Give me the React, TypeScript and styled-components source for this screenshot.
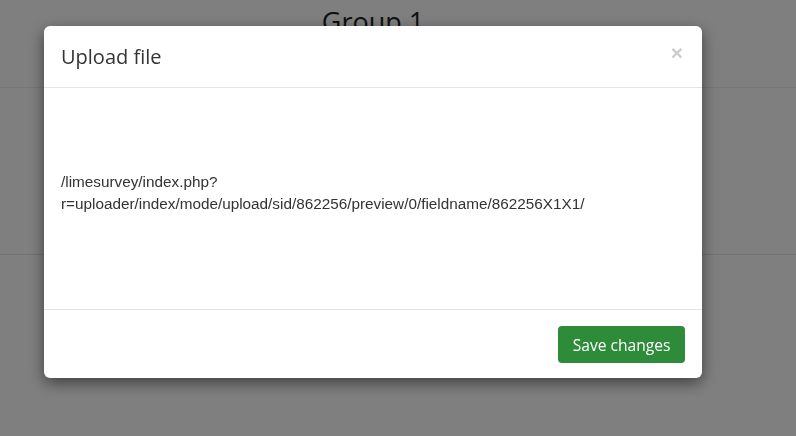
import React from 'react';
import styled, { createGlobalStyle } from 'styled-components';

const GlobalStyle = createGlobalStyle`
  html, body {
    margin: 0;
    padding: 0;
    background: #ffffff;
  }
  body {
    font-family: "Open Sans", "Liberation Sans", sans-serif;
    color: #333333;
  }
`;

const Page = styled.div`
  width: 796px;
  height: 436px;
  overflow: hidden;
  background: #ffffff;
`;

const GroupHeading = styled.div`
  height: 87px;
  border-bottom: 1px solid #eeeeee;
  text-align: center;
  padding-right: 50px;
`;

const GroupTitle = styled.h2`
  margin: 0;
  padding-top: 3px;
  font-family: "Open Sans", sans-serif;
  font-weight: 400;
  font-size: 27px;
  line-height: 38px;
  color: #222222;
`;

const GroupBody = styled.div`
  height: 166px;
  border-bottom: 1px solid #e6e6e6;
`;

const Backdrop = styled.div`
  position: fixed;
  inset: 0;
  background: rgba(0, 0, 0, 0.5);
  display: flex;
  align-items: flex-start;
  padding: 26px 94px 0 44px;
`;

const Dialog = styled.div`
  width: 658px;
  background: #ffffff;
  border-radius: 6px;
  box-shadow: 0 5px 15px rgba(0, 0, 0, 0.5);
`;

const Header = styled.div`
  display: flex;
  align-items: center;
  justify-content: space-between;
  height: 61px;
  padding: 0 17px;
  border-bottom: 1px solid #e5e5e5;
`;

const Title = styled.h4`
  margin: 0;
  font-family: "Open Sans", sans-serif;
  font-weight: 400;
  font-size: 20px;
  color: #333333;
`;

const Close = styled.button`
  border: 0;
  background: none;
  padding: 0;
  margin-top: -9px;
  margin-right: 2px;
  font-family: "Liberation Sans", sans-serif;
  font-size: 21px;
  line-height: 1;
  font-weight: 700;
  color: #cccccc;
  cursor: pointer;
`;

const Body = styled.div`
  height: 221px;
  box-sizing: border-box;
  padding: 83px 17px 0 17px;
`;

const Url = styled.p`
  margin: 0;
  font-family: "Liberation Sans", Arial, sans-serif;
  font-size: 15.3px;
  line-height: 22px;
  color: #333333;
  word-break: break-all;
`;

const Footer = styled.div`
  display: flex;
  justify-content: flex-end;
  border-top: 1px solid #e5e5e5;
  padding: 16px 17px 15px;
`;

const SaveButton = styled.button`
  height: 37px;
  padding: 0 14.5px;
  border: 0;
  border-radius: 4px;
  background: #2e8b39;
  color: #ffffff;
  font-family: "Open Sans", sans-serif;
  font-size: 15.6px;
  cursor: pointer;
`;

const App = () => (
  <Page>
    <GlobalStyle />
    <GroupHeading>
      <GroupTitle>Group 1</GroupTitle>
    </GroupHeading>
    <GroupBody />
    <Backdrop>
      <Dialog>
        <Header>
          <Title>Upload file</Title>
          <Close aria-label="Close">×</Close>
        </Header>
        <Body>
          <Url>
            /limesurvey/index.php?
            <br />
            r=uploader/index/mode/upload/sid/862256/preview/0/fieldname/862256X1X1/
          </Url>
        </Body>
        <Footer>
          <SaveButton>Save changes</SaveButton>
        </Footer>
      </Dialog>
    </Backdrop>
  </Page>
);

export default App;
